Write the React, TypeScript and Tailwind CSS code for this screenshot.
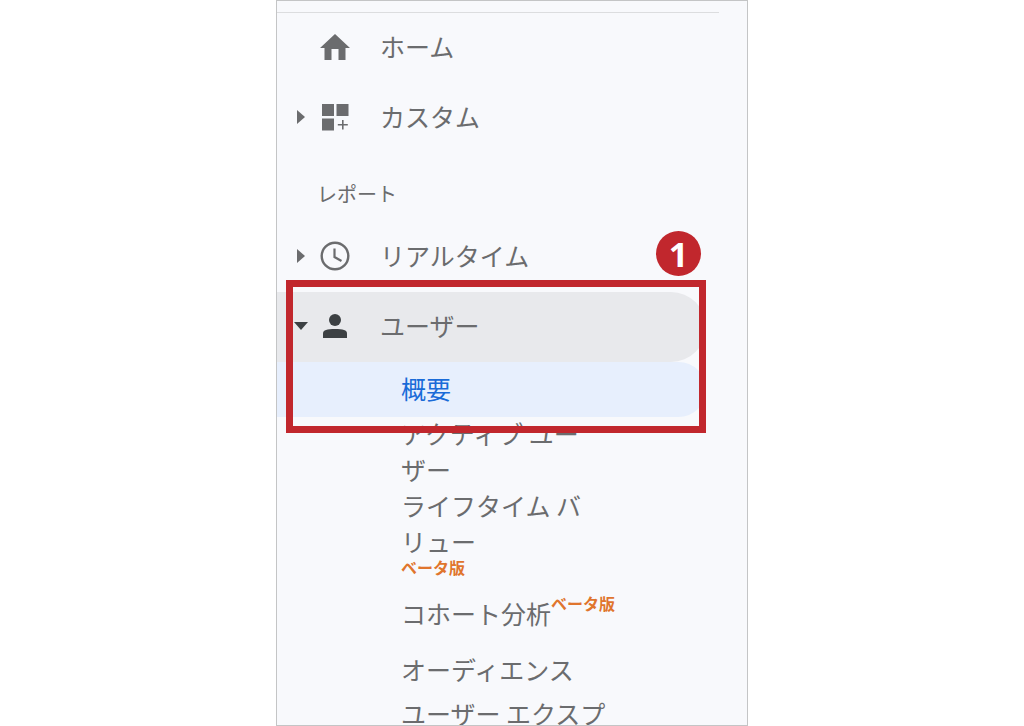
import type { ReactNode } from "react";

type NavRowProps = {
  label: string;
  icon: ReactNode;
  arrow?: "right" | "down";
  active?: boolean;
};

const HomeIcon = () => (
  <svg viewBox="0 0 30 26" className="w-[30px] h-[26px]" fill="currentColor" aria-hidden="true">
    <path d="M15 0 30 14h-4.500v12h-7V15h-7v11h-7V14H0z" />
  </svg>
);

const CustomIcon = () => (
  <svg viewBox="0 0 28 28" className="w-7 h-7" fill="currentColor" aria-hidden="true">
    <path d="M1 1h12v12H1zM15.500 1h12v12h-12zM1 15.500h12v12H1zM21 17h1.600v4h4.200v1.600h-4.200v4H21v-4h-4.200V21H21z" />
  </svg>
);

const ClockIcon = () => (
  <svg viewBox="0 0 30 30" className="w-[30px] h-[30px]" fill="none" stroke="currentColor" aria-hidden="true">
    <circle cx="15" cy="15" r="13.300" strokeWidth="2.400" />
    <path d="M14.500 7.500v8.500l7 4" strokeWidth="2.200" />
  </svg>
);

const PersonIcon = () => (
  <svg viewBox="0 0 24 26" className="w-6 h-[26px]" fill="currentColor" aria-hidden="true">
    <circle cx="12" cy="7" r="6" />
    <path d="M0 25v-4.500C0 17 4 16 12 16s12 1 12 4.500V25z" />
  </svg>
);

const Arrow = ({ direction }: { direction: "right" | "down" }) =>
  direction === "right" ? (
    <svg viewBox="0 0 8 14" className="w-2 h-3.5" fill="currentColor" aria-hidden="true">
      <path d="M0 0 8 7 0 14z" />
    </svg>
  ) : (
    <svg viewBox="0 0 14 8" className="w-3.5 h-2" fill="currentColor" aria-hidden="true">
      <path d="M0 0h14L7 8z" />
    </svg>
  );

const NavRow = ({ label, icon, arrow, active }: NavRowProps) => (
  <button
    type="button"
    aria-expanded={arrow ? arrow === "down" : undefined}
    className={`flex h-[70px] w-full items-center pb-0.5 text-left ${
      active ? "rounded-r-full bg-[#e8e9ec] text-[#3c4043]" : "text-[#6b6c6e]"
    }`}
  >
    <span className="ml-4 flex w-4 justify-center">{arrow && <Arrow direction={arrow} />}</span>
    <span className="ml-2 flex w-9 justify-center">{icon}</span>
    <span className="ml-[27px] pb-0.5 text-[#6b6c6e]">{label}</span>
  </button>
);

const Beta = () => <span className="text-base leading-4 font-bold text-[#e0752d]">ベータ版</span>;

const App = () => {
  return (
    <div className="h-screen overflow-hidden bg-white font-['Noto_Sans_CJK_JP',sans-serif] text-[25px] leading-9 font-normal text-[#6b6c6e]">
      <nav
        aria-label="レポート"
        className="mx-auto h-full w-full max-w-[472px] overflow-hidden border border-[#c4c5c6] bg-[#f8f9fc] pt-[11px]"
      >
        <hr className="mr-7 border-t border-[#dcdddf]" />

        <NavRow label="ホーム" icon={<HomeIcon />} />
        <NavRow label="カスタム" icon={<CustomIcon />} arrow="right" />

        <h2 className="flex h-[69px] items-center pt-3 pl-10 text-xl font-normal">レポート</h2>
        <NavRow label="リアルタイム" icon={<ClockIcon />} arrow="right" />

        <div className="relative mr-[41px]">
          <NavRow label="ユーザー" icon={<PersonIcon />} arrow="down" active />
          <a
            href="#overview"
            aria-current="page"
            className="flex h-[55px] items-center rounded-r-full bg-[#e7effd] pb-1 pl-[124px] text-[#1a6bd8]"
          >
            概要
          </a>
          {/* callout frame with its step number */}
          <div className="pointer-events-none absolute -top-3 right-0 -bottom-4 left-[9px] z-10 border-[7px] border-[#c1272d]" />
          <span className="absolute -top-[61px] right-[5px] flex size-[45px] items-center justify-center rounded-full bg-[#c1272d] font-['Open_Sans',sans-serif] text-[34px] font-bold text-white">
            1
          </span>
        </div>

        <ul className="-mt-0.5 pl-[124px]">
          <li>
            <a href="#active" className="block">
              アクティブ ユー
              <br />
              ザー
            </a>
          </li>
          <li>
            <a href="#lifetime" className="flex flex-col">
              <span>
                ライフタイム バ
                <br />
                リュー
              </span>
              <Beta />
            </a>
          </li>
          <li className="pt-5">
            <a href="#cohort" className="flex items-start">
              コホート分析
              <Beta />
            </a>
          </li>
          <li className="pt-5">
            <a href="#audience" className="block">
              オーディエンス
            </a>
          </li>
          <li className="pt-2">
            <a href="#explorer" className="block whitespace-nowrap">
              ユーザー エクスプ
            </a>
          </li>
        </ul>
      </nav>
    </div>
  );
};

export default App;
